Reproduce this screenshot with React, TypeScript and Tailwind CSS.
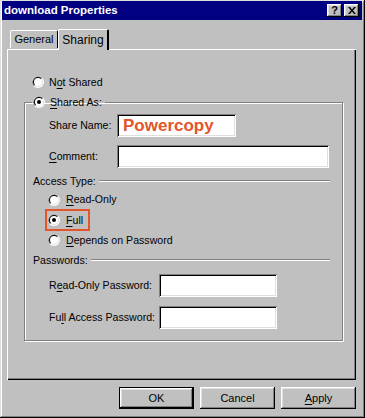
import React from "react";

const raised =
  "shadow-[inset_-1px_-1px_#000,inset_1px_1px_#fff,inset_-2px_-2px_#808080,inset_2px_2px_#dfdfdf]";
const sunken =
  "shadow-[inset_1px_1px_#808080,inset_-1px_-1px_#fff,inset_2px_2px_#000,inset_-2px_-2px_#dfdfdf]";

const Radio = ({ checked = false }: { checked?: boolean }) => (
  <svg width="12" height="12" viewBox="0 0 12 12" className="shrink-0">
    <circle cx="6" cy="6" r="6" fill="#fff" />
    <path d="M1.76 10.24 A6 6 0 0 1 10.24 1.76 L6 6 Z" fill="#808080" />
    <circle cx="6" cy="6" r="5" fill="#dfdfdf" />
    <path d="M2.46 9.54 A5 5 0 0 1 9.54 2.46 L6 6 Z" fill="#000" />
    <circle cx="6" cy="6" r="4" fill="#fff" />
    {checked && <circle cx="6" cy="6" r="2" fill="#000" />}
  </svg>
);

const U = ({ children }: { children: React.ReactNode }) => <span className="underline underline-offset-2">{children}</span>;

const Field = ({ w, children }: { w: string; children?: React.ReactNode }) => (
  <div className={`${w} h-[23px] bg-white ${sunken} flex items-center px-[6px] shrink-0`}>{children}</div>
);

const Etched = () => (
  <div className="flex-1 h-[2px] border-t border-[#808080] border-b-white border-b" />
);

const TitleBtn = ({ children }: { children: React.ReactNode }) => (
  <div className={`w-[15px] h-[13px] bg-[#c0c0c0] ${raised} flex items-center justify-center text-[11px] font-bold leading-none text-black`}>
    {children}
  </div>
);

const Button = ({ children, isDefault = false }: { children: React.ReactNode; isDefault?: boolean }) => (
  <div className={`w-[75px] h-[22px] ${isDefault ? "border border-black" : ""} bg-[#c0c0c0]`}>
    <div className={`w-full h-full ${raised} flex items-center justify-center`}>{children}</div>
  </div>
);

export default function App() {
  return (
    <div
      className="w-[365px] h-[418px] bg-[#c0c0c0] text-black text-[10.6px] leading-none shadow-[inset_-1px_-1px_#000,inset_1px_1px_#dfdfdf,inset_-2px_-2px_#808080,inset_2px_2px_#fff] flex flex-col pt-[1px] pl-[2px] pr-[3px]"
      style={{ fontFamily: '"Liberation Sans", Arial, sans-serif' }}
    >
      {/* title bar */}
      <div className="h-[19px] bg-[#000080] flex items-center pl-[2px] pr-[3px] shrink-0">
        <span className="text-white font-bold text-[11.5px] flex-1">download Properties</span>
        <div className="flex gap-[2px]">
          <TitleBtn>?</TitleBtn>
          <TitleBtn>
            <svg width="8" height="7" viewBox="0 0 8 7">
              <path d="M0 0h2l2 2.5L6 0h2L5 3.5 8 7H6L4 4.5 2 7H0l3-3.5z" fill="#000" />
            </svg>
          </TitleBtn>
        </div>
      </div>

      <div className="flex flex-col pl-[5px] pr-[6px] pt-[9px]">
        {/* tabs */}
        <div className="flex items-end h-[20px] pl-[3px]">
          <div className="w-[48px] h-[18px] border-l border-t border-white border-r-[#000] border-r rounded-t-[2px] flex items-center justify-center mb-[1px] text-[11px]">
            General
          </div>
          <div className="w-[51px] h-[21px] -mb-[1px] bg-[#c0c0c0] border-l border-t border-white border-r-[2px] border-r-[#000] rounded-t-[2px] flex items-center justify-center relative z-10 text-[12px]">
            Sharing
          </div>
        </div>

        {/* panel */}
        <div className="h-[331px] border-l border-t border-white shadow-[inset_-1px_-1px_#000,inset_-2px_-2px_#808080] flex flex-col pl-[16px] pr-[13px] pt-[25px]">
          <div className="flex items-center gap-[5px] h-[14px] pl-[8px]">
            <Radio />
            <span>
              N<U>o</U>t Shared
            </span>
          </div>

          <fieldset className="mt-[6px] h-[246px] border border-[#808080] shadow-[1px_1px_0_#fff,inset_1px_1px_0_#fff]">
            <legend className="ml-[7px] px-[1px] flex items-center gap-[5px] h-[14px]">
              <Radio checked />
              <span className="pr-[2px]">
                <U>S</U>hared As:
              </span>
            </legend>

            <div className="flex flex-col pl-[8px] pr-[12px] pt-[5px]">
              <div className="flex items-center pl-[16px]">
                <span className="w-[68px] whitespace-nowrap">Share Name:</span>
                <Field w="w-[119px]">
                  <span className="text-[#e4552b] font-bold text-[17px] leading-none">Powercopy</span>
                </Field>
              </div>
              <div className="flex items-center pl-[16px] mt-[8px]">
                <span className="w-[68px] whitespace-nowrap">
                  <U>C</U>omment:
                </span>
                <Field w="w-[212px]" />
              </div>

              <div className="flex items-center gap-[3px] mt-[6px] h-[14px]">
                <span className="whitespace-nowrap">Access Type:</span>
                <Etched />
              </div>

              <div className="flex flex-col pl-[15px] mt-[2px]">
                <div className="flex items-center gap-[6px] h-[19px]">
                  <Radio />
                  <span>
                    <U>R</U>ead-Only
                  </span>
                </div>
                <div className="flex">
                  <div className="flex items-center gap-[6px] h-[22px] border-2 border-[#e4552b] -ml-[3px] pl-[1px] pr-[5px]">
                    <Radio checked />
                    <span>
                      <U>F</U>ull
                    </span>
                  </div>
                </div>
                <div className="flex items-center gap-[6px] h-[18px]">
                  <Radio />
                  <span className="whitespace-nowrap">
                    <U>D</U>epends on Password
                  </span>
                </div>
              </div>

              <div className="flex items-center gap-[3px] mt-[4px] h-[14px]">
                <span className="whitespace-nowrap">Passwords:</span>
                <Etched />
              </div>

              <div className="flex items-center pl-[16px] mt-[7px]">
                <span className="w-[110px] whitespace-nowrap">
                  R<U>e</U>ad-Only Password:
                </span>
                <Field w="w-[118px]" />
              </div>
              <div className="flex items-center pl-[16px] mt-[9px]">
                <span className="w-[110px] whitespace-nowrap">
                  Fu<U>l</U>l Access Password:
                </span>
                <Field w="w-[118px]" />
              </div>
            </div>
          </fieldset>
        </div>

        {/* buttons */}
        <div className="flex justify-end gap-[6px] mt-[7px] text-[11px]">
          <Button isDefault>OK</Button>
          <Button>Cancel</Button>
          <Button>
            <span>
              <U>A</U>pply
            </span>
          </Button>
        </div>
      </div>
    </div>
  );
}
